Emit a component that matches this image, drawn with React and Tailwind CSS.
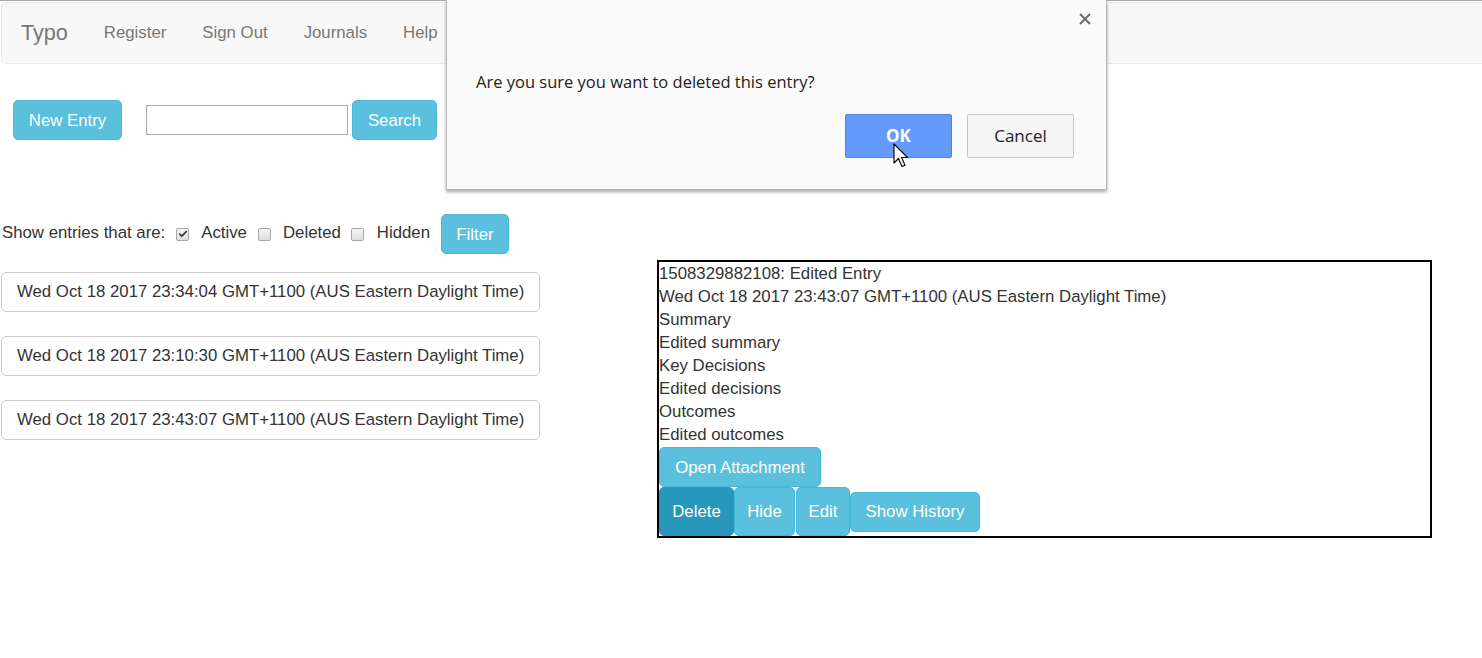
import { Check } from "lucide-react";

const entries = [
  "Wed Oct 18 2017 23:34:04 GMT+1100 (AUS Eastern Daylight Time)",
  "Wed Oct 18 2017 23:10:30 GMT+1100 (AUS Eastern Daylight Time)",
  "Wed Oct 18 2017 23:43:07 GMT+1100 (AUS Eastern Daylight Time)",
];

const detailLines = [
  "1508329882108: Edited Entry",
  "Wed Oct 18 2017 23:43:07 GMT+1100 (AUS Eastern Daylight Time)",
  "Summary",
  "Edited summary",
  "Key Decisions",
  "Edited decisions",
  "Outcomes",
  "Edited outcomes",
];

function Box({ checked }) {
  return (
    <span className="inline-flex h-[13px] w-[13px] items-center justify-center rounded-[2px] border border-[#a6a6a6] bg-gradient-to-b from-[#f4f4f4] to-[#dedede]">
      {checked && <Check size={10} strokeWidth={4} className="text-[#333]" />}
    </span>
  );
}

function ConfirmDialog() {
  return (
    <div className="absolute left-[446px] top-0 h-[190px] w-[661px] border border-t-0 border-[#b9b9b9] bg-[#fafafa] shadow-[0_2px_3px_rgba(0,0,0,0.35)] font-['Open_Sans',sans-serif]">
      <div className="flex justify-end pr-[14px] pt-[12px]">
        <svg width="14" height="14" viewBox="0 0 14 14">
          <path d="M2 2 L12 12 M12 2 L2 12" stroke="#6b6b6b" strokeWidth="2" />
        </svg>
      </div>
      <p className="mt-[45px] pl-[29px] text-[16.5px] leading-[22px] text-[#222]">
        Are you sure you want to deleted this entry?
      </p>
      <div className="mt-[21px] flex justify-end gap-[15px] pr-[32px]">
        <button className="relative h-[44px] w-[107px] rounded-[2px] border border-[#4d82dc] bg-[#649bfb] text-[17px] font-bold text-white">
          OK
          <svg
            className="absolute left-[47px] top-[28px]"
            width="16"
            height="26"
            viewBox="0 0 16 26"
          >
            <path
              d="M1 1 L1 20 L5.5 15.5 L9 23.5 L12 22.3 L8.6 14.5 L14.5 14.5 Z"
              fill="#fff"
              stroke="#000"
              strokeWidth="1.1"
              strokeLinejoin="round"
            />
          </svg>
        </button>
        <button className="h-[44px] w-[107px] rounded-[2px] border border-[#c6c6c6] bg-[#f5f5f5] text-[17px] text-[#222]">
          Cancel
        </button>
      </div>
    </div>
  );
}

export default function App() {
  const btn =
    "rounded-[5px] border border-[#46b8da] bg-[#5bc0de] text-white text-[16.8px] leading-[23px]";

  return (
    <div className="relative min-h-[658px] bg-white font-['Liberation_Sans',Arial,sans-serif] text-[16.8px] text-[#333]">
      <div className="h-px bg-[#a9a9a9]" />
      <nav className="ml-px mt-px flex h-[62px] items-center rounded-l-[5px] border border-r-0 border-[#e7e7e7] bg-[#f8f8f8] text-[#777]">
        <span className="px-[18px] pl-[19px] text-[21.6px]">Typo</span>
        <a className="px-[18px]">Register</a>
        <a className="px-[18px]">Sign Out</a>
        <a className="px-[18px]">Journals</a>
        <a className="px-[18px]">Help</a>
      </nav>

      <div className="mt-[36px] flex items-center pl-[13px]">
        <button className={`${btn} h-[40px] w-[109px]`}>New Entry</button>
        <input className="ml-[24px] h-[30px] w-[202px] border border-[#a9a9a9] bg-white" />
        <button className={`${btn} ml-[4px] h-[40px] w-[85px]`}>Search</button>
      </div>

      <div className="mt-[74px] flex items-center pl-[2px]">
        <span className="-translate-y-px">Show entries that are:</span>
        <span className="ml-[11px] mr-[12px] flex">
          <Box checked />
        </span>
        <span className="-translate-y-px">Active</span>
        <span className="ml-[11px] mr-[12px] flex">
          <Box />
        </span>
        <span className="-translate-y-px">Deleted</span>
        <span className="ml-[10px] mr-[13px] flex">
          <Box />
        </span>
        <span className="-translate-y-px">Hidden</span>
        <button className={`${btn} ml-[11px] h-[40px] w-[68px]`}>Filter</button>
      </div>

      <div className="mt-[6px] flex items-start">
        <div className="ml-px flex w-[539px] flex-col gap-[24px] pt-[12px]">
          {entries.map((e) => (
            <button
              key={e}
              className="h-[40px] whitespace-nowrap rounded-[5px] border border-[#ccc] bg-white pl-[15px] text-left"
            >
              {e}
            </button>
          ))}
        </div>

        <div className="ml-[117px] h-[278px] w-[775px] border-2 border-black leading-[23px]">
          {detailLines.map((l, i) => (
            <div key={i}>{l}</div>
          ))}
          <button className={`${btn} mt-px h-[40px] w-[162px]`}>Open Attachment</button>
          <div className="flex items-center">
            <button className="h-[49px] w-[75px] rounded-[5px] border border-[#4b7fd6] bg-[#2798bb] text-white">
              Delete
            </button>
            <button className={`${btn} h-[49px] w-[61px]`}>Hide</button>
            <button className={`${btn} ml-px h-[49px] w-[54px]`}>Edit</button>
            <button className={`${btn} h-[40px] w-[130px]`}>Show History</button>
          </div>
        </div>
      </div>

      <ConfirmDialog />
    </div>
  );
}
